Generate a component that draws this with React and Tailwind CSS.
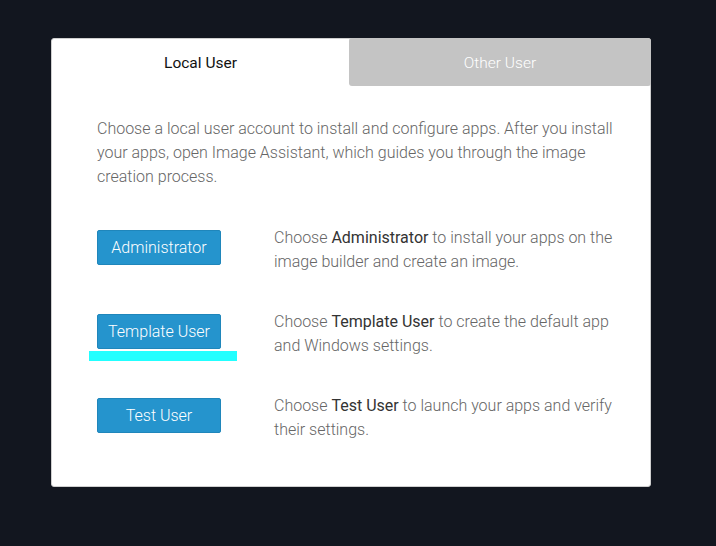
const ROWS = [
    { label: 'Administrator', before: 'Choose ', bold: 'Administrator', after: ' to install your apps on the image builder and create an image.' },
    { label: 'Template User', before: 'Choose ', bold: 'Template User', after: ' to create the default app and Windows settings.', marked: true },
    { label: 'Test User', before: 'Choose ', bold: 'Test User', after: ' to launch your apps and verify their settings.' },
];

export default function App() {
    return (
        <div className="h-[546px] w-full bg-[#12161f] pl-[51px] pt-[38px]" style={{ fontFamily: 'Roboto, sans-serif' }}>
            <div className="h-[449px] w-[600px] rounded-[3px] border border-[#cfcfcf] bg-white">
                <div className="grid h-[47px] grid-cols-[297px_1fr]">
                    <div className="flex items-center justify-center pt-[2px] text-[15.5px] text-[#111]">Local User</div>
                    <div className="-mr-px -mt-px flex items-center justify-center rounded-[3px] bg-[#c4c4c4] pt-[3px] text-[15.5px] font-light text-white">Other User</div>
                </div>

                <div className="pl-[45px] pr-[30px] pt-[31px]">
                    <p className="text-[16px] font-light leading-6 text-[#666]">
                        Choose a local user account to install and configure apps. After you install your apps, open Image Assistant, which guides you through the image creation process.
                    </p>

                    <div className="mt-[37px] flex flex-col gap-[36px]">
                        {ROWS.map((row) => (
                            <div key={row.label} className="flex items-start gap-[53px]">
                                <div className="relative mt-1 shrink-0">
                                    <button className="flex h-[35px] w-[124px] items-center justify-center rounded-[2px] border border-[#1f86bb] bg-[#2594cd] text-[16px] font-light text-white">
                                        {row.label}
                                    </button>
                                    {row.marked && <div className="absolute left-[-8px] top-[37px] h-[10px] w-[148px] bg-[#22ffff]" />}
                                </div>
                                <p className="w-[345px] text-[16px] font-light leading-6 text-[#666]">
                                    {row.before}
                                    <span className="font-normal text-[#333]">{row.bold}</span>
                                    {row.after}
                                </p>
                            </div>
                        ))}
                    </div>
                </div>
            </div>
        </div>
    );
}
